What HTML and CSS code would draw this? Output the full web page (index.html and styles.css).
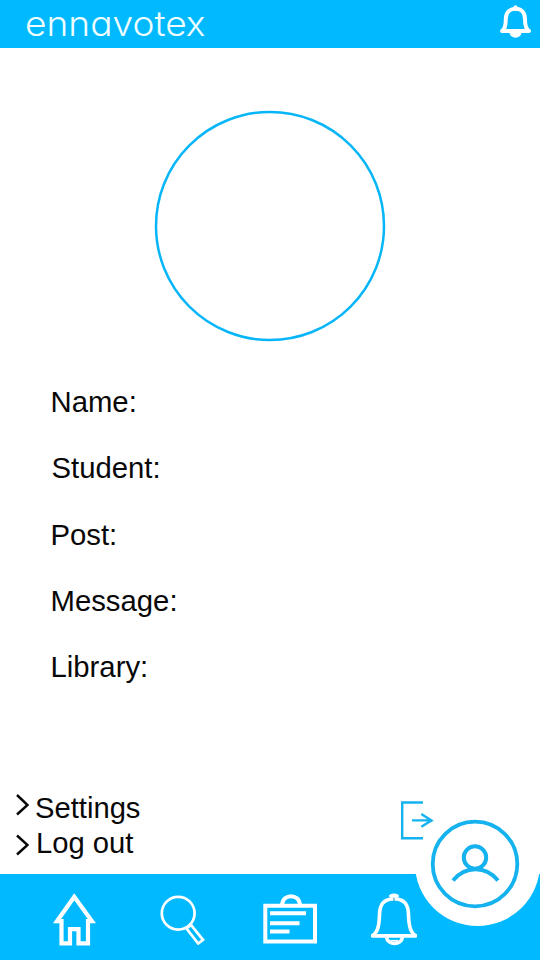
FILE: index.html
```html
<!DOCTYPE html>
<html lang="en">
<head>
<meta charset="utf-8">
<title>ennavotex</title>
<link rel="stylesheet" href="styles.css">
</head>
<body>
<div class="app">
  <header class="topbar">
    <span class="brand">ennavotex</span>
    <svg class="top-bell" width="34" height="34" viewBox="0 0 34 34" fill="none" stroke="#fff" stroke-width="4" stroke-linejoin="round">
      <path d="M4 27C7.500 25 7.800 20 7.800 15C7.800 8.500 12 4.800 17.500 4.800S27 8.500 27 15C27 20 27.500 25 31 27Z"/>
      <path d="M17.500 3.200V5" stroke-linecap="round"/>
      <path d="M11.500 28H23.500C23.500 35.500 11.500 35.500 11.500 28Z" fill="#fff" stroke="none"/>
    </svg>
  </header>
  <main class="profile">
    <svg class="avatar" width="232" height="232" viewBox="0 0 232 232" fill="none" stroke="#06b6f8" stroke-width="2.500">
      <circle cx="116" cy="116" r="114"/>
    </svg>
    <ul class="fields">
      <li>Name:</li>
      <li class="shifted">Student:</li>
      <li>Post:</li>
      <li>Message:</li>
      <li>Library:</li>
    </ul>
    <div class="actions">
      <ul class="links">
        <li><svg width="14" height="22" viewBox="0 0 14 22"><path d="M2 1L12.500 11L2 20.500"/></svg><span>Settings</span></li>
        <li class="logout"><svg width="14" height="22" viewBox="0 0 14 22"><path d="M2 1.500L12.500 11L2 20.500"/></svg><span>Log out</span></li>
      </ul>
      <svg class="exit" width="34" height="40" viewBox="0 0 34 40" fill="none" stroke="#14b2ee" stroke-width="2.400">
        <path d="M23 2.500H2.200V38.200H23"/>
        <path d="M12 20.400H31M21.300 14L31.500 20.400L21.300 26.700"/>
      </svg>
    </div>
  </main>
  <nav class="tabs">
    <svg width="44" height="54" viewBox="0 0 44 54" fill="none" stroke="#fff" stroke-width="4.200">
      <path d="M22.300 4.800L5 29.200H9.500V51.300H18V37.200H26.500V51.300H36V29.200H40Z"/>
    </svg>
    <svg width="46" height="50" viewBox="0 0 46 50" fill="none" stroke="#fff" stroke-width="2.700">
      <circle cx="18.200" cy="18.200" r="16.400"/>
      <path d="M26.500 33.500L31 30L43 44.800L38.200 48.500Z"/>
    </svg>
    <svg width="56" height="54" viewBox="0 0 56 54" fill="none" stroke="#fff" stroke-width="4">
      <path d="M3.300 13.800H53V49.500H3.300Z"/>
      <path d="M20 13C21 1.200 37 1.200 38 13"/>
      <path d="M8 21.300H44M8 31.200H37.500M8 39.500H27.500"/>
    </svg>
    <svg width="54" height="54" viewBox="0 0 54 54" fill="none" stroke="#fff" stroke-width="3.600">
      <path d="M6.500 43.700C11 41 13 36 13.500 23C13.500 12 18 7 28 6.600C38 7 42.500 12 42.500 23C43 36 45 41 49.500 43.700Z" stroke-linejoin="bevel"/>
      <path d="M5 43.700H51" stroke-width="3.600"/>
      <path d="M24.500 5C25 2.700 31 2.700 31.500 5"/>
      <path d="M20.500 45C21.500 53.500 35.500 53.500 36.500 45"/>
      <path d="M24.500 48.600H32" stroke-width="1.500"/>
      <path d="M28 5.500V9.500" stroke="#169bbb" stroke-width="1"/>
    </svg>
    <div class="account">
      <svg width="92" height="92" viewBox="0 0 92 92" fill="none" stroke="#14b2ee">
        <circle cx="46" cy="46" r="42.300" stroke-width="3.800"/>
        <circle cx="46" cy="39.500" r="11.200" stroke-width="4"/>
        <path d="M24 62.500C36 47.500 57 47.500 69 62.500" stroke-width="3.800"/>
      </svg>
    </div>
  </nav>
</div>
</body>
</html>
```
FILE: styles.css
```css
* { box-sizing: border-box; }
body { margin: 0; background: #fff; color: #080808; font-family: "Liberation Sans", Arial, sans-serif; }
ul { list-style: none; margin: 0; padding: 0; }
svg { display: block; flex: none; }
.app { width: 540px; height: 960px; display: flex; flex-direction: column; overflow: hidden; }
.topbar {
  height: 47.500px;
  flex: none;
  display: flex;
  justify-content: space-between;
  align-items: flex-start;
  padding: 5px 8px 0 24.500px;
  background: #00b9ff;
}
.brand {
  color: #f0fdff;
  font-family: Inter, "Liberation Sans", sans-serif;
  font-size: 35px;
  font-weight: 300;
  line-height: 36px;
  font-feature-settings: "cv11" 1;
  transform: scaleX(1.06);
  transform-origin: left;
}
.profile { flex: 1; display: flex; flex-direction: column; }
.avatar { margin: 62px auto 0; }
.fields { padding: 27.500px 0 0 50.500px; font-size: 29.300px; }
.fields li { height: 66.300px; line-height: 66.300px; }
.fields .shifted { padding-left: 1px; }
.actions { display: flex; justify-content: space-between; padding: 90.500px 106px 0 15px; }
.links { font-size: 29.200px; }
.links li { display: flex; align-items: center; gap: 6px; height: 34.700px; }
.links svg { fill: none; stroke: #080808; stroke-width: 2.500; position: relative; top: -3px; }
.links .logout svg { top: 2px; }
.links .logout span { padding-left: 1px; }
.exit { position: relative; z-index: 1; margin-top: 9px; }
.top-bell { margin-top: -1px; }
.tabs {
  position: relative;
  height: 86.500px;
  flex: none;
  display: flex;
  align-items: flex-start;
  padding: 18.500px 0 0 52px;
  background: #00b9ff;
}
.tabs > svg:nth-child(2) { margin: 3px 0 0 64px; }
.tabs > svg:nth-child(3) { margin-left: 56px; }
.tabs > svg:nth-child(4) { margin-left: 48px; }
.account {
  position: absolute;
  left: 414.500px;
  top: -73px;
  width: 125px;
  height: 125px;
  padding: 17px 0 0 14.500px;
  border-radius: 50%;
  background: #fff;
}
```
